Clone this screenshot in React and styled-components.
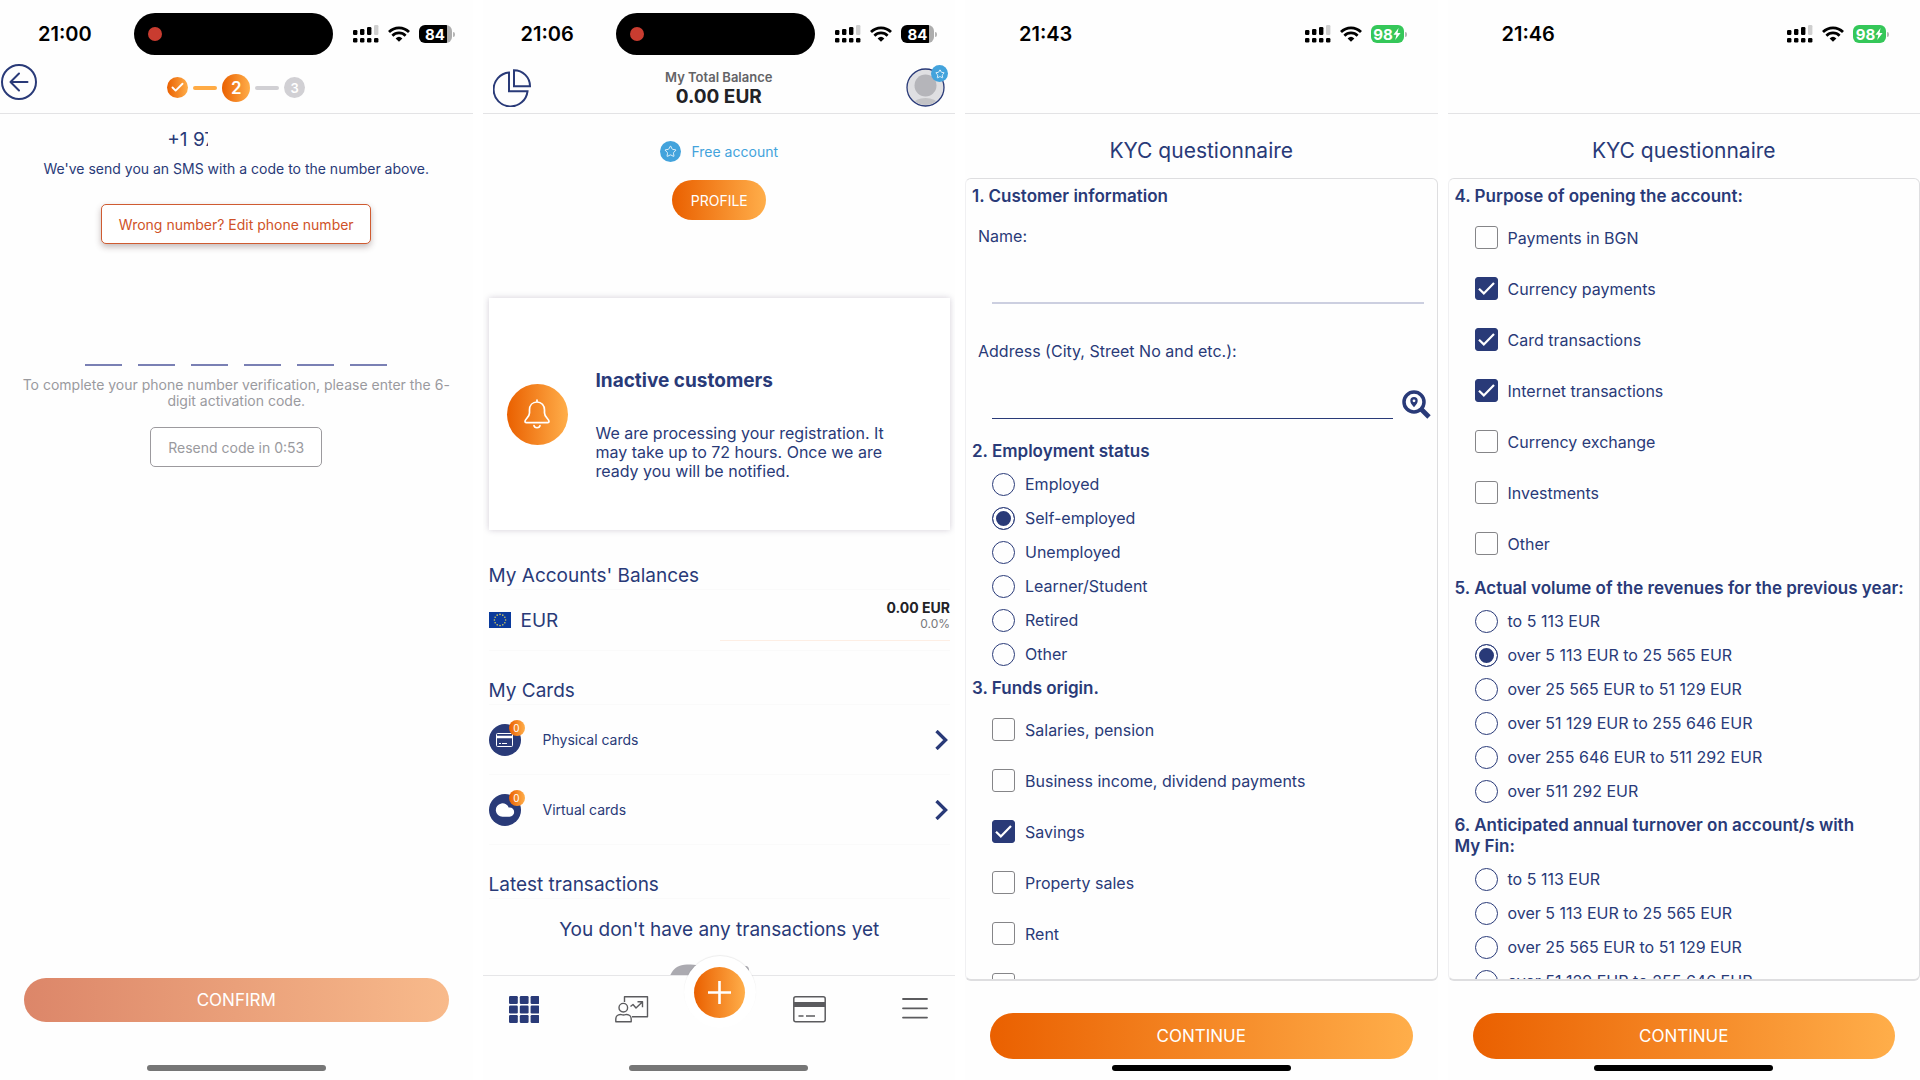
import React from "react"
import styled, { createGlobalStyle } from "styled-components"
import { Check, Cloud, Star } from "lucide-react"

const navy = "#293a78"
const orange = "linear-gradient(90deg, #ea6000, #ffae4a)"

const GlobalStyle = createGlobalStyle`
  * {
    box-sizing: border-box;
  }
  body {
    margin: 0;
    background: #ffffff;
    color: ${navy};
    font-family: Inter, "Liberation Sans", sans-serif;
    font-size: 16px;
  }
  h1, h2, h3, p {
    margin: 0;
  }
  button, input {
    font-family: inherit;
  }
  svg {
    display: block;
  }
`

const Board = styled.div`
  display: grid;
  grid-template-columns: repeat(4, minmax(0, 1fr));
  gap: 10px;
`

const Screen = styled.section`
  display: flex;
  flex-direction: column;
  height: 100vh;
  overflow: hidden;
  background: #fefefe;
`

/** Status bar */

const StatusRow = styled.div`
  display: flex;
  align-items: center;
  height: 62px;
  flex-shrink: 0;
  padding: ${(p) => (p.$island ? "6px 18px 0 38px" : "6px 31px 0 54px")};
  color: #000000;
`

const Time = styled.span`
  font-size: 20px;
  font-weight: 600;
`

const Island = styled.div`
  display: flex;
  align-items: center;
  width: 199px;
  height: 42px;
  margin-left: auto;
  margin-right: 20px;
  padding-left: 14px;
  border-radius: 21px;
  background: #000000;
`

const RecordDot = styled.span`
  width: 14px;
  height: 14px;
  border-radius: 50%;
  background: #c93c30;
`

const Indicators = styled.div`
  display: flex;
  align-items: center;
  gap: 9px;
  margin-left: ${(p) => (p.$island ? "0" : "auto")};
`

const BatteryBox = styled.div`
  display: flex;
  align-items: center;
  gap: 1px;
`

const BatteryLevel = styled.span`
  display: flex;
  align-items: center;
  justify-content: center;
  width: 33px;
  height: 18px;
  border-radius: 6px;
  color: #ffffff;
  font-size: 15px;
  font-weight: 700;
  background: ${(p) => (p.$charging ? "#35c759" : "linear-gradient(90deg, #000000 84%, #adadad 84%)")};
`

const BatteryCap = styled.span`
  width: 2px;
  height: 5px;
  border-radius: 0 2px 2px 0;
  background: #b5b5b5;
`

function Battery({ level, charging }) {
  return (
    <BatteryBox>
      <BatteryLevel $charging={charging}>
        {level}
        {charging && (
          <svg width="8" height="12" viewBox="0 0 8 12">
            <path d="M5.6 0 0.4 6.8h3L2.2 12 7.6 5.1H4.5z" fill="#ffffff" />
          </svg>
        )}
      </BatteryLevel>
      <BatteryCap />
    </BatteryBox>
  )
}

function StatusBar({ time, level, island, charging }) {
  return (
    <StatusRow $island={island}>
      <Time>{time}</Time>
      {island && (
        <Island>
          <RecordDot />
        </Island>
      )}
      <Indicators $island={island}>
        <svg width="26" height="18" viewBox="0 0 26 18">
          <rect x="0" y="5" width="4.4" height="5" rx="1.2" />
          <rect x="7" y="4" width="4.4" height="6" rx="1.2" />
          <rect x="14" y="2" width="4.4" height="8" rx="1.2" />
          <rect x="21" y="0" width="4.4" height="10" rx="1.2" fill="#cfcfcf" />
          <rect x="0" y="13" width="4.4" height="4.4" rx="1.2" />
          <rect x="7" y="13" width="4.4" height="4.4" rx="1.2" />
          <rect x="14" y="13" width="4.4" height="4.4" rx="1.2" />
          <rect x="21" y="13" width="4.4" height="4.4" rx="1.2" />
        </svg>
        <svg width="22" height="16" viewBox="0 0 22 16" fill="none" stroke="#000000" strokeWidth="2.7">
          <path d="M1 6A14 14 0 0 1 21 6" />
          <path d="M4.4 9.7A9.3 9.3 0 0 1 17.6 9.7" />
          <path d="M11 15.7 7.6 12.4A5 5 0 0 1 14.4 12.4z" fill="#000000" stroke="none" />
        </svg>
        <Battery level={level} charging={charging} />
      </Indicators>
    </StatusRow>
  )
}

const Header = styled.header`
  display: grid;
  grid-template-columns: 1fr auto 1fr;
  align-items: center;
  height: 52px;
  flex-shrink: 0;
  padding: 0 ${(p) => p.$pad || 0}px;
  border-bottom: 1px solid #e3e3e5;
`

const HomeBar = styled.div`
  width: 179px;
  height: 6px;
  flex-shrink: 0;
  margin: 0 auto 9px;
  border-radius: 3px;
  background: ${(p) => (p.$dim ? "#767676" : "#000000")};
`

const WideButton = styled.button`
  height: ${(p) => (p.$faded ? 44 : 46)}px;
  flex-shrink: 0;
  margin: ${(p) => (p.$faded ? "auto 24px 43px" : "32px 25px 6px")};
  border: none;
  border-radius: 23px;
  color: #ffffff;
  font-size: 17px;
  background: ${(p) => (p.$faded ? "linear-gradient(90deg, #dc8669, #f8ba8b)" : orange)};
`

/** Phone verification */

const BackButton = styled.button`
  display: flex;
  align-items: center;
  justify-content: center;
  align-self: start;
  width: 36px;
  height: 36px;
  margin: 2px 0 0 1px;
  padding: 0;
  border: 2px solid ${navy};
  border-radius: 50%;
  background: transparent;
`

const Steps = styled.div`
  display: flex;
  align-items: center;
  gap: 5px;
`

const Step = styled.span`
  display: flex;
  align-items: center;
  justify-content: center;
  width: ${(p) => (p.$current ? 28 : 21)}px;
  height: ${(p) => (p.$current ? 28 : 21)}px;
  border-radius: 50%;
  color: #ffffff;
  font-size: ${(p) => (p.$current ? 17 : 13)}px;
  font-weight: 600;
  background: ${(p) => (p.$pending ? "#d1d0d4" : orange)};
`

const StepLine = styled.span`
  width: 24px;
  height: 4px;
  border-radius: 2px;
  background: ${(p) => (p.$pending ? "#d1d0d4" : "#ffab45")};
`

const Verify = styled.div`
  display: flex;
  flex-direction: column;
  align-items: center;
  padding: 12px 20px 0;
  font-size: 14px;
  line-height: 16px;
  text-align: center;
`

const PhoneNumber = styled.div`
  width: 138px;
  margin-bottom: 7px;
`

const PhoneDigits = styled.span`
  display: block;
  width: 41px;
  overflow: hidden;
  font-size: 19px;
  line-height: 28px;
  text-align: left;
  white-space: nowrap;
`

const OutlineButton = styled.button`
  width: ${(p) => (p.$muted ? 172 : 270)}px;
  height: 40px;
  padding: 0;
  border: 1px solid ${(p) => (p.$muted ? "#9c9a9e" : "#cf5b31")};
  border-radius: 5px;
  color: ${(p) => (p.$muted ? "#9a9a9e" : "#cf5228")};
  font-size: 14px;
  background: #ffffff;
  box-shadow: ${(p) => (p.$muted ? "none" : "0 3px 6px rgba(60, 30, 30, 0.3)")};
`

const CodeInputs = styled.div`
  display: flex;
  gap: 16px;
  margin: 86px 0 11px;
`

const CodeInput = styled.input`
  width: 37px;
  height: 36px;
  padding: 0;
  border: none;
  border-bottom: 2px solid #7a80b4;
  color: ${navy};
  font-size: 20px;
  text-align: center;
  background: transparent;
  outline: none;
`

const Note = styled.p`
  margin-bottom: 18px;
  color: #9a9a9e;
`

const SmsText = styled.p`
  margin-bottom: 27px;
`

function VerifyScreen() {
  return (
    <Screen>
      <StatusBar time="21:00" level="84" island />
      <Header>
        <BackButton aria-label="Back">
          <svg width="20" height="20" viewBox="0 0 20 20" fill="none" stroke={navy} strokeWidth="2" strokeLinecap="round" strokeLinejoin="round">
            <path d="M18.5 10H1.5M10 1.5 1.5 10l8.5 8.5" />
          </svg>
        </BackButton>
        <Steps>
          <Step>
            <Check size={15} strokeWidth={3} />
          </Step>
          <StepLine />
          <Step $current>2</Step>
          <StepLine $pending />
          <Step $pending>3</Step>
        </Steps>
      </Header>
      <Verify>
        <PhoneNumber>
          <PhoneDigits>+1 97</PhoneDigits>
        </PhoneNumber>
        <SmsText>We've send you an SMS with a code to the number above.</SmsText>
        <OutlineButton>Wrong number? Edit phone number</OutlineButton>
        <CodeInputs>
          {[1, 2, 3, 4, 5, 6].map((n) => (
            <CodeInput key={n} aria-label={`Digit ${n}`} maxLength={1} />
          ))}
        </CodeInputs>
        <Note>To complete your phone number verification, please enter the 6-digit activation code.</Note>
        <OutlineButton $muted>Resend code in 0:53</OutlineButton>
      </Verify>
      <WideButton $faded>CONFIRM</WideButton>
      <HomeBar $dim />
    </Screen>
  )
}

/** Dashboard */

const IconButton = styled.button`
  padding: 0;
  border: none;
  background: transparent;
`

const Balance = styled.div`
  text-align: center;
  color: #636366;
  font-size: 13px;
  font-weight: 600;
  line-height: 18px;
`

const BalanceAmount = styled.div`
  color: #222226;
  font-size: 19px;
  font-weight: 700;
  line-height: 22px;
`

const Avatar = styled(IconButton)`
  position: relative;
  justify-self: end;
`

const StarCircle = styled.span`
  display: flex;
  align-items: center;
  justify-content: center;
  width: ${(p) => p.$size}px;
  height: ${(p) => p.$size}px;
  border-radius: 50%;
  color: #ffffff;
  background: #43a3dc;
`

const AvatarBadge = styled(StarCircle)`
  position: absolute;
  top: -3px;
  right: -3px;
`

const Content = styled.div`
  display: flex;
  flex-direction: column;
  flex: 1;
  min-height: 0;
  overflow: hidden;
  padding: 0 5px 0 6px;
`

const Plan = styled.div`
  display: flex;
  align-items: center;
  justify-content: center;
  gap: 10px;
  margin: 27px 0 18px;
  color: #43a3dc;
  font-size: 14px;
  line-height: 21px;
`

const ProfileButton = styled.button`
  align-self: center;
  width: 94px;
  height: 40px;
  flex-shrink: 0;
  padding: 0;
  border: none;
  border-radius: 20px;
  color: #ffffff;
  font-size: 14px;
  background: ${orange};
`

const Notice = styled.div`
  display: flex;
  align-items: center;
  gap: 28px;
  flex-shrink: 0;
  height: 232px;
  margin-top: 78px;
  padding: 0 60px 0 18px;
  background: #ffffff;
  box-shadow: 0 0 6px rgba(60, 40, 80, 0.22);
`

const NoticeIcon = styled.div`
  display: flex;
  align-items: center;
  justify-content: center;
  width: 61px;
  height: 61px;
  flex-shrink: 0;
  border-radius: 50%;
  background: ${orange};
`

const NoticeBody = styled.div`
  padding-top: 22px;
  font-size: 16px;
  line-height: 19px;
`

const NoticeTitle = styled.h2`
  margin-bottom: 31px;
  font-size: 19px;
  font-weight: 700;
  line-height: 24px;
`

const SectionTitle = styled.h2`
  flex-shrink: 0;
  height: 28px;
  margin-top: ${(p) => p.$space}px;
  border-bottom: 1px solid #fafafa;
  font-size: 19px;
  font-weight: 400;
  line-height: 28px;
`

const AccountRow = styled.div`
  display: flex;
  align-items: center;
  gap: 10px;
  height: 61px;
  flex-shrink: 0;
  border-bottom: 1px solid #fafafa;
  font-size: 19px;
`

const Amounts = styled.div`
  flex: 0 0 230px;
  margin-left: auto;
  padding: 0 0 8px;
  border-bottom: 1px solid #fdeee4;
  text-align: right;
  color: #222226;
  font-size: 14px;
  font-weight: 700;
  line-height: 16px;
`

const Percent = styled.div`
  color: #76767a;
  font-size: 12px;
  font-weight: 400;
`

const CardRow = styled.button`
  display: flex;
  align-items: center;
  gap: 22px;
  height: 70px;
  flex-shrink: 0;
  padding: 0 2px 0 0;
  border: none;
  border-bottom: 1px solid #fafafa;
  color: ${navy};
  font-size: 14px;
  text-align: left;
  background: transparent;
`

const CardIcon = styled.span`
  position: relative;
  display: flex;
  align-items: center;
  justify-content: center;
  width: 32px;
  height: 32px;
  border-radius: 50%;
  color: #ffffff;
  background: ${navy};
`

const CountBadge = styled.span`
  position: absolute;
  top: -4px;
  right: -4px;
  width: 16px;
  height: 16px;
  border-radius: 50%;
  color: #ffffff;
  font-size: 10px;
  line-height: 16px;
  text-align: center;
  background: ${orange};
`

const RowChevron = styled.svg`
  margin-left: auto;
`

const EmptyText = styled.p`
  margin: 17px 0 16px;
  font-size: 19px;
  line-height: 28px;
  text-align: center;
`

const EmptyArt = styled.svg`
  flex-shrink: 0;
  align-self: center;
  margin-left: -18px;
`

const Nav = styled.nav`
  position: relative;
  display: flex;
  justify-content: space-between;
  height: 90px;
  flex-shrink: 0;
  padding: 0 27px 23px 26px;
  border-top: 1px solid #e6e6e8;
`

const NavGroup = styled.div`
  display: flex;
  align-items: center;
  gap: 76px;
`

const AddRing = styled.div`
  position: absolute;
  top: -20px;
  left: calc(50% - 35px);
  display: flex;
  align-items: center;
  justify-content: center;
  width: 72px;
  height: 72px;
  border-radius: 50%;
  background: #ffffff;
  box-shadow: 0 -1px 1px rgba(0, 0, 0, 0.07);
`

const AddButton = styled.button`
  display: flex;
  align-items: center;
  justify-content: center;
  width: 51px;
  height: 51px;
  padding: 0;
  border: none;
  border-radius: 50%;
  background: ${orange};
`

// twelve stars on a ring
const flagStars = Array.from({ length: 12 }, (_, i) => {
  const angle = (i * Math.PI) / 6
  return { cx: 11 + 5.6 * Math.cos(angle), cy: 8 + 5.6 * Math.sin(angle) }
})

const Chevron = () => (
  <RowChevron width="13" height="20" viewBox="0 0 13 20" fill="none" stroke={navy} strokeWidth="3.3">
    <path d="M1.5 1 10.6 10l-9.1 9" />
  </RowChevron>
)

function DashboardScreen() {
  return (
    <Screen>
      <StatusBar time="21:06" level="84" island />
      <Header $pad={10}>
        <IconButton aria-label="Statistics">
          <svg width="38" height="38" viewBox="0 0 38 38" fill="none" stroke={navy} strokeWidth="2">
            <path d="M16 3.5A17 17 0 1 0 34.5 22.3L16 22.3z" />
            <path d="M21 1.2A16 16 0 0 1 37 17.2L21 17.2z" />
          </svg>
        </IconButton>
        <Balance>
          My Total Balance
          <BalanceAmount>0.00 EUR</BalanceAmount>
        </Balance>
        <Avatar aria-label="Profile">
          <svg width="39" height="39" viewBox="0 0 39 39">
            <defs>
              <clipPath id="face">
                <circle cx="19.5" cy="19.5" r="17.5" />
              </clipPath>
            </defs>
            <circle cx="19.5" cy="19.5" r="18.5" fill="#dfdfe2" stroke={navy} strokeWidth="1.3" />
            <ellipse cx="19.5" cy="36" rx="12" ry="6" fill="#c3c3c6" clipPath="url(#face)" />
            <circle cx="19.5" cy="17.5" r="12.5" fill="#dfdfe2" />
            <circle cx="19.5" cy="17.5" r="11" fill="#b5b5ba" />
          </svg>
          <AvatarBadge $size={17}>
            <Star size={10} strokeWidth={2} />
          </AvatarBadge>
        </Avatar>
      </Header>
      <Content>
        <Plan>
          <StarCircle $size={21}>
            <Star size={13} strokeWidth={1.5} />
          </StarCircle>
          Free account
        </Plan>
        <ProfileButton>PROFILE</ProfileButton>
        <Notice>
          <NoticeIcon>
            <svg width="26" height="30" viewBox="0 0 26 30" fill="none" stroke="#ffffff" strokeWidth="1.7" strokeLinecap="round" strokeLinejoin="round">
              <path d="M13 1v2C8.5 3 5.5 6.3 5.5 11v3c0 4-4.5 6-4.5 8.5 0 .8.5 1.2 1.2 1.2h21.6c.7 0 1.2-.4 1.2-1.2C25 20 20.5 18 20.5 14v-3c0-4.7-3-8-7.5-8" />
              <path d="M10 26.5c.3 3 5.7 3 6 0" />
            </svg>
          </NoticeIcon>
          <NoticeBody>
            <NoticeTitle>Inactive customers</NoticeTitle>
            <p>We are processing your registration. It may take up to 72 hours. Once we are ready you will be notified.</p>
          </NoticeBody>
        </Notice>
        <SectionTitle $space={32}>My Accounts' Balances</SectionTitle>
        <AccountRow>
          <svg width="22" height="16" viewBox="0 0 22 16">
            <rect width="22" height="16" fill="#0a3a9c" />
            {flagStars.map((s, i) => (
              <circle key={i} cx={s.cx} cy={s.cy} r="0.8" fill="#d8cf5a" />
            ))}
          </svg>
          EUR
          <Amounts>
            0.00 EUR
            <Percent>0.0%</Percent>
          </Amounts>
        </AccountRow>
        <SectionTitle $space={26}>My Cards</SectionTitle>
        <CardRow>
          <CardIcon>
            <svg width="17" height="14" viewBox="0 0 17 14" fill="none" stroke="#ffffff">
              <rect x="0.5" y="0.5" width="16" height="13" rx="1" />
              <path d="M1 4h15" strokeWidth="2.5" />
              <path d="M3 10.5h2M6 10.5h5" />
            </svg>
            <CountBadge>0</CountBadge>
          </CardIcon>
          Physical cards
          <Chevron />
        </CardRow>
        <CardRow>
          <CardIcon>
            <Cloud size={20} fill="#ffffff" />
            <CountBadge>0</CountBadge>
          </CardIcon>
          Virtual cards
          <Chevron />
        </CardRow>
        <SectionTitle $space={26}>Latest transactions</SectionTitle>
        <EmptyText>You don't have any transactions yet</EmptyText>
        <EmptyArt width="82" height="60" viewBox="0 0 82 60" fill="#abaab0">
          <path d="M0 18.5C3 9 9 4.5 18 4.5c5 0 9 .5 13 1L38 40H0z" />
          <path d="M61 .5c3-1 7 0 9 3.5l-3 1z" />
          <path d="M73 8c3-3 7-2.5 7 2s-1 5-3 4z" />
        </EmptyArt>
      </Content>
      <Nav>
        <NavGroup>
          <IconButton aria-label="Home">
            <svg width="30" height="27" viewBox="0 0 30 27" fill={navy}>
              {[0, 9.5, 19].map((y) =>
                [0, 10.8, 21.6].map((x) => <rect key={x + "-" + y} x={x} y={y} width="8.8" height="8" rx="1.2" />)
              )}
            </svg>
          </IconButton>
          <IconButton aria-label="Analytics">
            <svg width="34" height="27" viewBox="0 0 34 27" fill="none" stroke="#5b5b5e" strokeWidth="1.4" strokeLinejoin="round">
              <path d="M9.5 6V.7h23v20H17" />
              <circle cx="8.3" cy="11.7" r="4.3" />
              <path d="M.8 25.8V23c0-2.5 2-4.5 4.5-4.5.8 0 1.5.5 3.2.5s2.300-.5 3.200-.5c2.500 0 4.500 2 4.500 4.500v2.800z" />
              <path d="M15.500 10.500l2.500-2 3 3.500L27.300 6M22.500 5.800h5v5.500" />
            </svg>
          </IconButton>
        </NavGroup>
        <NavGroup>
          <IconButton aria-label="Cards">
            <svg width="33" height="27" viewBox="0 0 33 27" fill="none" stroke="#5b5b5e" strokeWidth="1.5">
              <rect x="0.8" y="0.8" width="31.4" height="25" rx="2" />
              <path d="M1 8.500h31" strokeWidth="5" />
              <path d="M5.500 20h5M13 20h9" />
            </svg>
          </IconButton>
          <IconButton aria-label="Menu">
            <svg width="26" height="24" viewBox="0 0 26 24" stroke="#5b5b5e" strokeWidth="1.8" strokeLinecap="round">
              <path d="M1 2h24M1 11.300h24M1 20.600h24" />
            </svg>
          </IconButton>
        </NavGroup>
        <AddRing>
          <AddButton aria-label="Add">
            <svg width="23" height="23" viewBox="0 0 23 23" stroke="#ffffff" strokeWidth="2.6">
              <path d="M11.500 0v23M0 11.500h23" />
            </svg>
          </AddButton>
        </AddRing>
      </Nav>
      <HomeBar $dim />
    </Screen>
  )
}

/** Questionnaire */

const Title = styled.h1`
  flex-shrink: 0;
  padding-top: 10px;
  font-size: 21px;
  font-weight: 400;
  line-height: 54px;
  text-align: center;
`

const FormBox = styled.div`
  flex: 1;
  min-height: 0;
  overflow: hidden;
  padding: 0 6px;
  border: 1px solid #dedee0;
  border-left-color: #f0f0f2;
  border-bottom-width: 2px;
  border-radius: 6px;
`

const Question = styled.h3`
  padding: 7px 0 5px;
  font-size: 17px;
  font-weight: 600;
  line-height: 21px;
`

const Fields = styled.div`
  display: flex;
  flex-direction: column;
  gap: 8px;
  padding-left: 6px;
`

const Field = styled.div`
  padding: 14px 0 15px;
`

const FieldLabel = styled.label`
  display: block;
  line-height: 20px;
`

const FieldRow = styled.div`
  display: flex;
  align-items: flex-end;
  gap: 9px;
  padding: 0 ${(p) => (p.$withIcon ? 0 : 7)}px 0 14px;
`

const LineInput = styled.input`
  flex: 1;
  min-width: 0;
  height: 58px;
  padding: 24px 0 0;
  border: none;
  border-bottom: ${(p) => (p.$soft ? "2px solid #cccfe0" : "1px solid #293a78")};
  color: ${navy};
  font-size: 16px;
  background: transparent;
  outline: none;
`

const CheckList = styled.div`
  padding-bottom: 2px;
`

const OptionLabel = styled.label`
  display: flex;
  align-items: center;
  gap: 10px;
  height: ${(p) => (p.$tall ? 51 : 34)}px;
  padding-left: 20px;
`

const Mark = styled.span`
  display: grid;
  place-items: center;
  flex-shrink: 0;
  color: #ffffff;

  > * {
    grid-area: 1 / 1;
  }
`

const Radio = styled.input`
  appearance: none;
  width: 23px;
  height: 23px;
  margin: 0;
  border: 1px solid ${navy};
  border-radius: 50%;

  &:checked {
    background: ${navy};
    box-shadow: inset 0 0 0 3px #ffffff;
  }
`

const Checkbox = styled.input`
  appearance: none;
  width: 23px;
  height: 23px;
  margin: 0;
  border: 1px solid #858588;
  border-radius: 3px;

  &:checked {
    border-color: ${navy};
    background: ${navy};
  }
`

function RadioGroup({ name, title, options, selected }) {
  return (
    <div role="radiogroup" aria-labelledby={name}>
      <Question id={name}>{title}</Question>
      {options.map((option) => (
        <OptionLabel key={option}>
          <Radio type="radio" name={name} defaultChecked={option === selected} />
          {option}
        </OptionLabel>
      ))}
    </div>
  )
}

function CheckGroup({ name, title, options, selected }) {
  return (
    <CheckList role="group" aria-labelledby={name}>
      <Question id={name}>{title}</Question>
      {options.map((option) => (
        <OptionLabel key={option} $tall>
          <Mark>
            <Checkbox type="checkbox" name={name} defaultChecked={selected.includes(option)} />
            {selected.includes(option) && (
              <svg width="17" height="13" viewBox="0 0 17 13" fill="none" stroke="#ffffff" strokeWidth="2.2">
                <path d="M1 6.8l4.8 4.6L16 1" />
              </svg>
            )}
          </Mark>
          {option}
        </OptionLabel>
      ))}
    </CheckList>
  )
}

const employment = ["Employed", "Self-employed", "Unemployed", "Learner/Student", "Retired", "Other"]

const funds = ["Salaries, pension", "Business income, dividend payments", "Savings", "Property sales", "Rent", "Other"]

const purposes = [
  "Payments in BGN",
  "Currency payments",
  "Card transactions",
  "Internet transactions",
  "Currency exchange",
  "Investments",
  "Other",
]

const amounts = [
  "to 5 113 EUR",
  "over 5 113 EUR to 25 565 EUR",
  "over 25 565 EUR to 51 129 EUR",
  "over 51 129 EUR to 255 646 EUR",
  "over 255 646 EUR to 511 292 EUR",
  "over 511 292 EUR",
]

function KycScreen({ time, children }) {
  return (
    <Screen>
      <StatusBar time={time} level="98" charging />
      <Header />
      <Title>KYC questionnaire</Title>
      <FormBox>{children}</FormBox>
      <WideButton>CONTINUE</WideButton>
      <HomeBar />
    </Screen>
  )
}

export default function App() {
  return (
    <>
      <GlobalStyle />
      <Board>
        <VerifyScreen />
        <DashboardScreen />
        <KycScreen time="21:43">
          <Question>1. Customer information</Question>
          <Fields>
            <Field>
              <FieldLabel htmlFor="name">Name:</FieldLabel>
              <FieldRow>
                <LineInput id="name" type="text" $soft />
              </FieldRow>
            </Field>
            <Field>
              <FieldLabel htmlFor="address">Address (City, Street No and etc.):</FieldLabel>
              <FieldRow $withIcon>
                <LineInput id="address" type="text" />
                <IconButton aria-label="Find address">
                  <svg width="29" height="29" viewBox="0 0 29 29" fill="none" stroke={navy}>
                    <circle cx="12" cy="12" r="10" strokeWidth="3.5" />
                    <path d="M19 19l8 8" strokeWidth="4.8" />
                    <path
                      d="M12 17.3C9.5 14.3 8.3 12.6 8.3 10.7a3.7 3.7 0 0 1 7.4 0c0 1.9-1.2 3.6-3.7 6.6zM12 12.2a1.4 1.4 0 1 0 0-2.8 1.4 1.4 0 0 0 0 2.8z"
                      fill={navy}
                      fillRule="evenodd"
                      stroke="none"
                    />
                  </svg>
                </IconButton>
              </FieldRow>
            </Field>
          </Fields>
          <RadioGroup name="employment" title="2. Employment status" options={employment} selected="Self-employed" />
          <CheckGroup name="funds" title="3. Funds origin." options={funds} selected={["Savings"]} />
        </KycScreen>
        <KycScreen time="21:46">
          <CheckGroup
            name="purpose"
            title="4. Purpose of opening the account:"
            options={purposes}
            selected={["Currency payments", "Card transactions", "Internet transactions"]}
          />
          <RadioGroup
            name="revenues"
            title="5. Actual volume of the revenues for the previous year:"
            options={amounts}
            selected="over 5 113 EUR to 25 565 EUR"
          />
          <RadioGroup
            name="turnover"
            title={"6. Anticipated annual turnover on account/s with My\u00a0Fin:"}
            options={amounts}
          />
        </KycScreen>
      </Board>
    </>
  )
}
